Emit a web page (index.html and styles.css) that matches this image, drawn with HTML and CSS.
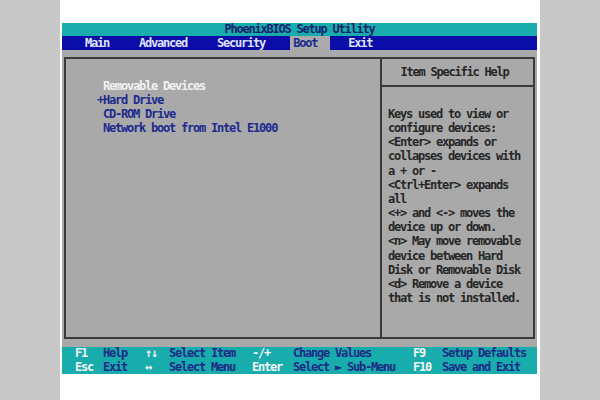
FILE: index.html
```html
<!DOCTYPE html>
<html>
<head>
<meta charset="utf-8">
<link rel="stylesheet" href="styles.css">
</head>
<body>
<div class="photo">
  <div class="bios">
    <div class="title">PhoenixBIOS Setup Utility</div>
    <div class="nav">
      <span class="tab tab-main">Main</span>
      <span class="tab tab-adv">Advanced</span>
      <span class="tab tab-sec">Security</span>
      <span class="tab tab-boot active">Boot</span>
      <span class="tab tab-exit">Exit</span>
    </div>
    <div class="main">
      <div class="box">
        <div class="list">
          <div class="item group">Removable Devices</div>
          <div class="item"><span class="expand">+</span>Hard Drive</div>
          <div class="item">CD-ROM Drive</div>
          <div class="item">Network boot from Intel E1000</div>
        </div>
        <div class="help">
          <div class="help-head">Item Specific Help</div>
          <div class="help-body">Keys used to view or<br>configure devices:<br>&lt;Enter&gt; expands or<br>collapses devices with<br>a + or -<br>&lt;Ctrl+Enter&gt; expands<br>all<br>&lt;+&gt; and &lt;-&gt; moves the<br>device up or down.<br>&lt;n&gt; May move removable<br>device between Hard<br>Disk or Removable Disk<br>&lt;d&gt; Remove a device<br>that is not installed.</div>
        </div>
      </div>
    </div>
    <div class="footer">
      <span class="key">F1</span><span class="desc">Help</span>
      <span class="key">↑↓</span><span class="desc">Select Item</span>
      <span class="key">-/+</span><span class="desc">Change Values</span>
      <span class="key">F9</span><span class="desc">Setup Defaults</span>
      <span class="key">Esc</span><span class="desc">Exit</span>
      <span class="key">↔</span><span class="desc">Select Menu</span>
      <span class="key">Enter</span><span class="desc">Select ► Sub-Menu</span>
      <span class="key">F10</span><span class="desc">Save and Exit</span>
    </div>
  </div>
</div>
</body>
</html>
```

FILE: styles.css
```css
html, body {
  margin: 0;
  padding: 0;
}
body {
  background: #c8c8c8;
  width: 600px;
  height: 400px;
  overflow: hidden;
}
.photo {
  margin-left: 60px;
  width: 480px;
  height: 400px;
  background: #ffffff;
  padding-top: 23px;
  box-sizing: border-box;
}
.bios {
  margin-left: 2px;
  width: 475px;
  font-family: "DejaVu Sans Mono", "Liberation Mono", monospace;
  font-weight: bold;
  font-size: 12px;
  letter-spacing: -1.22px;
  white-space: nowrap;
}
.title {
  height: 13px;
  line-height: 13px;
  background: #19acac;
  color: #1a2270;
  text-align: center;
}
.nav {
  height: 14px;
  line-height: 14px;
  background: #0c0ca8;
  display: flex;
  padding-left: 20px;
}
.tab {
  color: #dfe3ff;
  padding: 0 3px;
}
.tab-adv { margin-left: 24px; }
.tab-sec { margin-left: 24px; }
.tab-boot { margin-left: 22px; padding-right: 13px; }
.tab-exit { margin-left: 15px; }
.tab.active {
  background: #ababab;
  color: #1c2a8c;
}
.main {
  background: #a9a9a9;
  height: 297px;
  padding: 7px 2px 8px 2px;
  box-sizing: border-box;
}
.box {
  height: 282px;
  border: 2px solid #3a3a3a;
  box-sizing: border-box;
  display: grid;
  grid-template-columns: 314px 1fr;
}
.list {
  padding: 20px 0 0 37px;
}
.item {
  height: 14px;
  line-height: 14px;
  color: #1c2a8e;
}
.item.group {
  color: #f2f2f2;
}
.expand {
  display: inline-block;
  width: 6px;
  margin-left: -6px;
}
.help {
  border-left: 2px solid #3a3a3a;
  color: #262626;
}
.help-head {
  height: 26px;
  line-height: 26px;
  border-bottom: 2px solid #3a3a3a;
  text-align: center;
  padding-right: 6px;
}
.help-body {
  padding: 20px 0 0 6px;
  line-height: 14.15px;
}
.footer {
  height: 27px;
  background: #19acac;
  display: grid;
  grid-template-columns: 28px 42px 24px 83px 41px 120px 29px 1fr;
  grid-auto-rows: 13.5px;
  line-height: 13.5px;
  padding-left: 13px;
}
.key {
  color: #f4f4f4;
}
.desc {
  color: #1c2a86;
}
```
